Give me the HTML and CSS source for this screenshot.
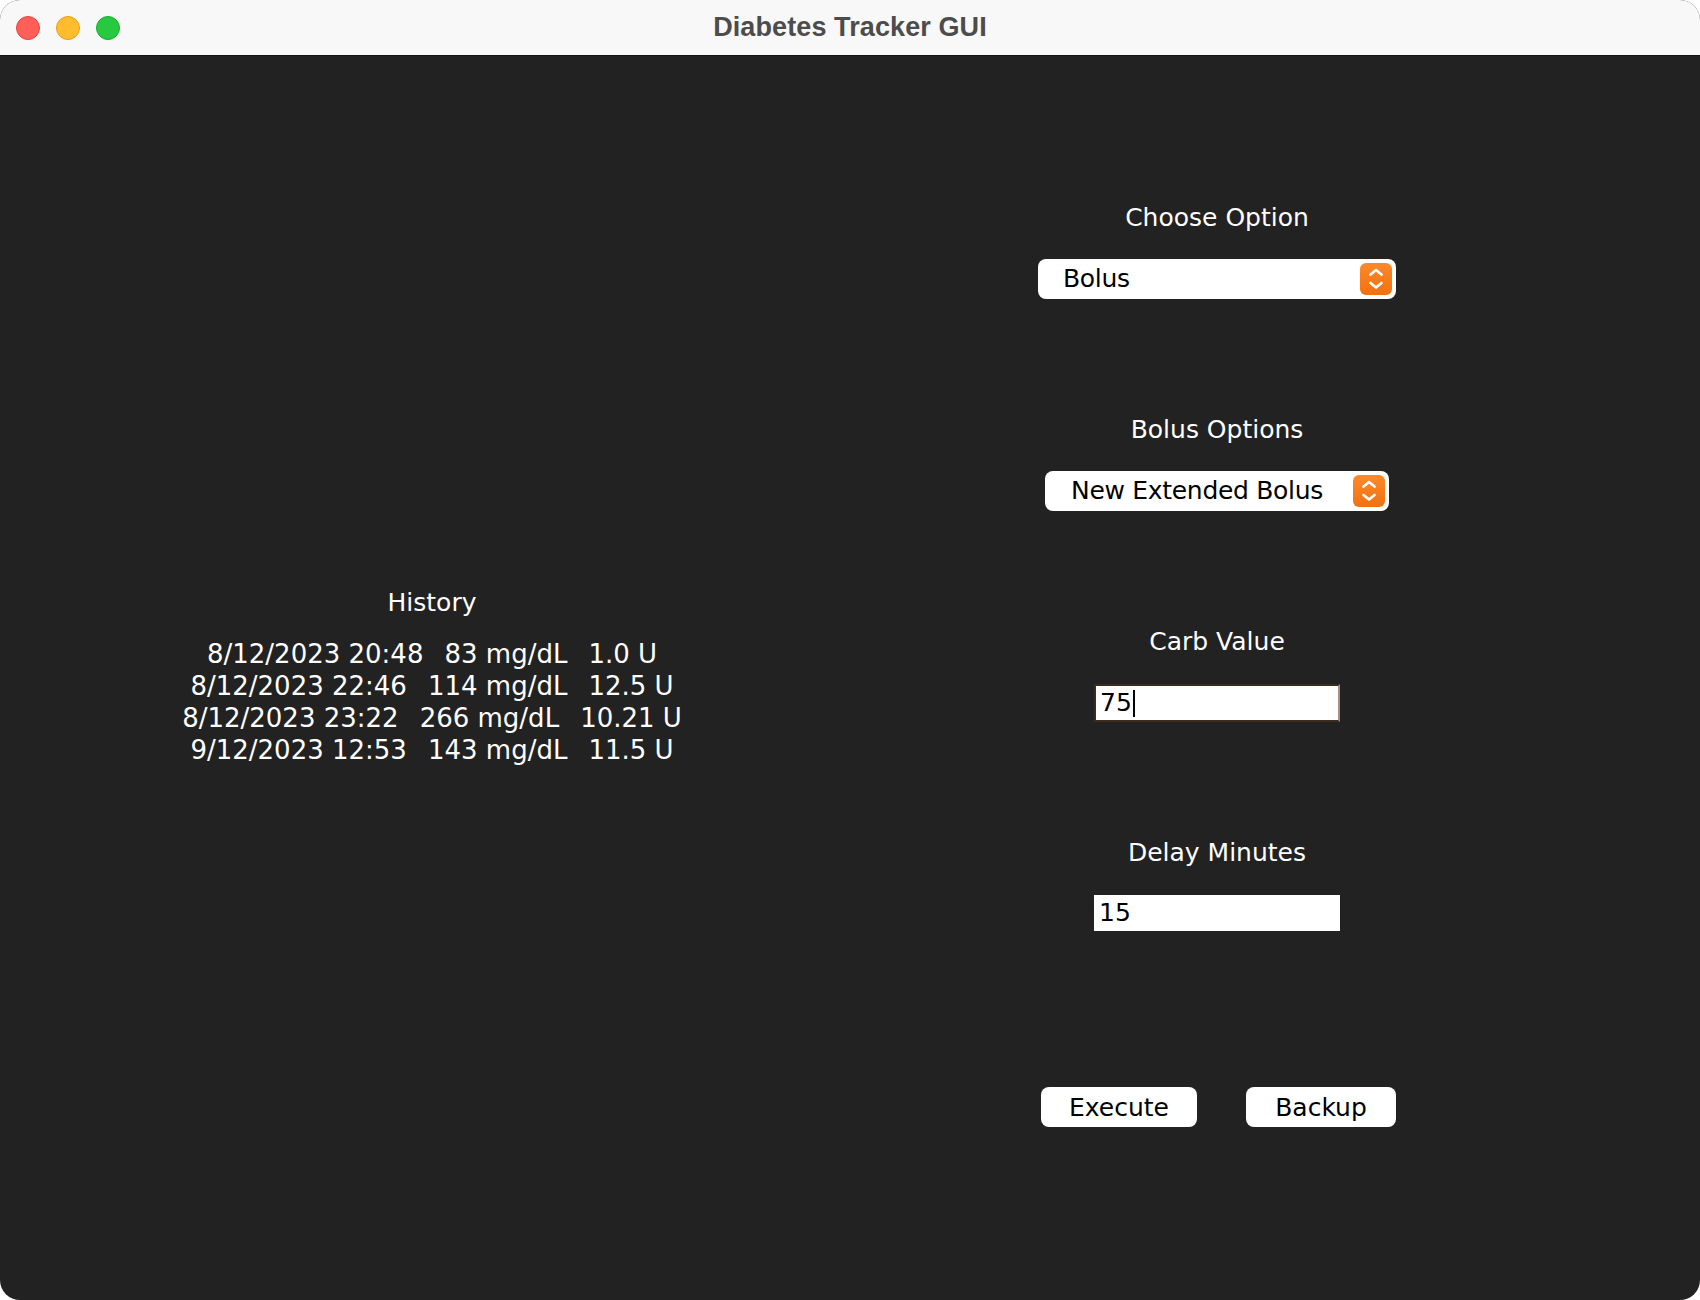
FILE: index.html
```html
<!DOCTYPE html>
<html lang="en">
<head>
<meta charset="utf-8">
<title>Diabetes Tracker GUI</title>
<link rel="stylesheet" href="styles.css">
</head>
<body>
<div class="window">
  <header class="titlebar">
    <div class="lights">
      <span class="light red"></span>
      <span class="light yellow"></span>
      <span class="light green"></span>
    </div>
    <div class="title">Diabetes Tracker GUI</div>
    <div></div>
  </header>
  <main class="content">
    <section class="history">
      <div class="history-title">History</div>
      <div class="history-rows">
        <div class="row"><span>8/12/2023 20:48</span><span class="col">83 mg/dL</span><span class="col">1.0 U</span></div>
        <div class="row"><span>8/12/2023 22:46</span><span class="col">114 mg/dL</span><span class="col">12.5 U</span></div>
        <div class="row"><span>8/12/2023 23:22</span><span class="col">266 mg/dL</span><span class="col">10.21 U</span></div>
        <div class="row"><span>9/12/2023 12:53</span><span class="col">143 mg/dL</span><span class="col">11.5 U</span></div>
      </div>
    </section>
    <section class="controls">
      <div class="group group-combo">
        <div class="label">Choose Option</div>
        <div class="combo combo-wide">
          <span class="combo-text">Bolus</span>
          <span class="stepper"><svg viewBox="0 0 32 32" width="32" height="32"><path d="M10.5 11.6 L16 7 L21.5 11.6 M10.5 20 L16 24.6 L21.5 20" fill="none" stroke="#fff" stroke-width="2.6" stroke-linecap="round" stroke-linejoin="round"/></svg></span>
        </div>
      </div>
      <div class="group group-combo">
        <div class="label">Bolus Options</div>
        <div class="combo combo-narrow">
          <span class="combo-text">New Extended Bolus</span>
          <span class="stepper"><svg viewBox="0 0 32 32" width="32" height="32"><path d="M10.5 11.6 L16 7 L21.5 11.6 M10.5 20 L16 24.6 L21.5 20" fill="none" stroke="#fff" stroke-width="2.6" stroke-linecap="round" stroke-linejoin="round"/></svg></span>
        </div>
      </div>
      <div class="group group-field">
        <div class="label">Carb Value</div>
        <div class="field field-focus">75<span class="caret"></span></div>
      </div>
      <div class="group group-field">
        <div class="label">Delay Minutes</div>
        <div class="field">15</div>
      </div>
      <div class="buttons">
        <button class="btn btn-execute">Execute</button>
        <button class="btn btn-backup">Backup</button>
      </div>
    </section>
  </main>
</div>
</body>
</html>
```

FILE: styles.css
```css
html, body {
  margin: 0;
  padding: 0;
  background: #ffffff;
}

.window {
  width: 1700px;
  height: 1300px;
  border-radius: 20px;
  overflow: hidden;
  background: #222222;
  display: flex;
  flex-direction: column;
}

.titlebar {
  height: 55px;
  flex: 0 0 55px;
  background: #f8f8f8;
  border-bottom: 1px solid #141414;
  display: grid;
  grid-template-columns: 1fr auto 1fr;
  align-items: center;
}

.lights {
  display: flex;
  gap: 16px;
  padding-left: 16px;
}

.light {
  width: 24px;
  height: 24px;
  border-radius: 50%;
  box-sizing: border-box;
}
.red { background: #ff5f57; border: 1px solid #e2463f; }
.yellow { background: #febc2e; border: 1px solid #e1a116; }
.green { background: #28c840; border: 1px solid #14ae2a; }

.title {
  font-family: "Liberation Sans", Arial, sans-serif;
  font-weight: bold;
  font-size: 27px;
  color: #4c4c4c;
  letter-spacing: 0.1px;
}

.content {
  flex: 1;
  display: grid;
  grid-template-columns: 864px 358px;
  column-gap: 174px;
  font-family: "DejaVu Sans", sans-serif;
  font-size: 25px;
  line-height: 30px;
  color: #ffffff;
}

.history {
  align-self: center;
  text-align: center;
  padding-bottom: 2px;
}

.history-title {
  margin-bottom: 20px;
}

.history-rows {
  font-size: 26px;
  line-height: 32px;
}

.row {
  white-space: pre;
}

.col {
  padding-left: 21px;
}

.controls {
  padding-top: 147px;
  display: flex;
  flex-direction: column;
  align-items: center;
  gap: 116px;
}

.group {
  display: flex;
  flex-direction: column;
  align-items: center;
}
.group-combo { gap: 26px; }
.group-field { gap: 27px; }

.label {
  color: #ffffff;
}

.combo {
  height: 40px;
  box-sizing: border-box;
  background: #ffffff;
  border-radius: 8px;
  display: flex;
  align-items: center;
  justify-content: space-between;
  padding: 0 4px 0 25px;
  color: #000000;
  letter-spacing: -0.3px;
}
.combo-wide { width: 358px; }
.combo-narrow { width: 344px; padding-left: 26px; }

.stepper {
  width: 32px;
  height: 32px;
  border-radius: 6px;
  background: linear-gradient(#fb8a2c, #f2700f);
  display: flex;
}

.field {
  width: 246px;
  height: 36px;
  box-sizing: border-box;
  background: #ffffff;
  color: #000000;
  padding-left: 5px;
  line-height: 36px;
  display: flex;
  align-items: center;
}

.field-focus {
  height: 38px;
  border: 2px solid #3b2a1e;
  border-right-color: #a89086;
  padding-left: 4px;
}

.caret {
  width: 2px;
  height: 27px;
  background: #000000;
  margin-left: 1px;
}

.buttons {
  margin-top: 40px;
  width: 358px;
  box-sizing: border-box;
  padding-left: 3px;
  display: flex;
  justify-content: space-between;
}

.btn {
  height: 40px;
  border: none;
  border-radius: 8px;
  background: #ffffff;
  color: #000000;
  font-family: "DejaVu Sans", sans-serif;
  font-size: 25px;
  padding: 0;
}
.btn-execute { width: 156px; }
.btn-backup { width: 150px; }
```
